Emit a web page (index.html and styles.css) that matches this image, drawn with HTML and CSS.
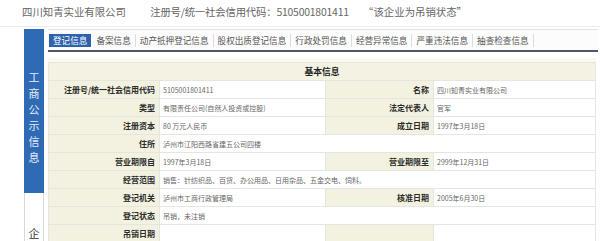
FILE: index.html
```html
<!DOCTYPE html>
<html lang="zh-CN">
<head>
    <meta charset="UTF-8">
    <title>企业信用信息公示</title>
    <link rel="stylesheet" href="styles.css">
</head>
<body>
    <div class="topbar">
        <span class="corp-name">四川知青实业有限公司</span>
        <span class="corp-code">注册号/统一社会信用代码：5105001801411</span>
        <span class="corp-state">“该企业为吊销状态”</span>
    </div>

    <div class="main">
        <div class="side">
            <div class="side-blue">工<br>商<br>公<br>示<br>信<br>息</div>
            <div class="side-next">企</div>
        </div>

        <div class="content">
            <div class="tabs">
                <span class="tab active">登记信息</span>
                <span class="tab">备案信息</span>
                <span class="tab">动产抵押登记信息</span>
                <span class="tab">股权出质登记信息</span>
                <span class="tab">行政处罚信息</span>
                <span class="tab">经营异常信息</span>
                <span class="tab">严重违法信息</span>
                <span class="tab">抽查检查信息</span>
            </div>

            <div class="panel">
                <table class="info">
                    <colgroup>
                        <col class="c-label">
                        <col class="c-value">
                        <col class="c-label2">
                        <col>
                    </colgroup>
                    <tr>
                        <th colspan="4" class="caption">基本信息</th>
                    </tr>
                    <tr>
                        <th>注册号/统一社会信用代码</th>
                        <td>5105001801411</td>
                        <th>名称</th>
                        <td>四川知青实业有限公司</td>
                    </tr>
                    <tr>
                        <th>类型</th>
                        <td>有限责任公司(自然人投资或控股)</td>
                        <th>法定代表人</th>
                        <td>官军</td>
                    </tr>
                    <tr>
                        <th>注册资本</th>
                        <td>80 万元人民币</td>
                        <th>成立日期</th>
                        <td>1997年3月18日</td>
                    </tr>
                    <tr>
                        <th>住所</th>
                        <td colspan="3">泸州市江阳西路省建五公司四楼</td>
                    </tr>
                    <tr>
                        <th>营业期限自</th>
                        <td>1997年3月18日</td>
                        <th>营业期限至</th>
                        <td>2999年12月31日</td>
                    </tr>
                    <tr>
                        <th>经营范围</th>
                        <td colspan="3">销售：针纺织品、百货、办公用品、日用杂品、五金交电、饲料。</td>
                    </tr>
                    <tr>
                        <th>登记机关</th>
                        <td>泸州市工商行政管理局</td>
                        <th>核准日期</th>
                        <td>2005年6月30日</td>
                    </tr>
                    <tr>
                        <th>登记状态</th>
                        <td colspan="3">吊销，未注销</td>
                    </tr>
                    <tr>
                        <th>吊销日期</th>
                        <td></td>
                        <th></th>
                        <td></td>
                    </tr>
                </table>
            </div>
        </div>
    </div>
</body>
</html>
```

FILE: styles.css
```css
body {
    margin: 0;
    padding: 0;
    background: #fff;
    font-family: "Noto Sans CJK SC", "Noto Sans", sans-serif;
    color: #333;
    overflow: hidden;
}
.topbar {
    height: 26px;
    line-height: 24px;
    padding-left: 22px;
    font-size: 10.4px;
    color: #666;
    border-bottom: 1px solid #ececec;
    white-space: nowrap;
}
.corp-code {
    margin-left: 22px;
    letter-spacing: -0.2px;
}
.corp-state {
    margin-left: 12px;
}
.main {
    display: flex;
    padding-left: 24px;
    margin-top: 2px;
}
.side {
    width: 20px;
    display: flex;
    flex-direction: column;
}
.side-blue {
    height: 124px;
    padding-top: 40px;
    background: #2f6ab4;
    color: #e6eefa;
    font-size: 11px;
    line-height: 16px;
    text-align: center;
}
.side-next {
    height: 60px;
    box-sizing: border-box;
    border: 1px solid #d8d8d8;
    border-top: none;
    padding-top: 32px;
    text-align: center;
    font-size: 11px;
    line-height: 16px;
    color: #333;
}
.content {
    margin-left: 4px;
    width: 550px;
}
.tabs {
    display: flex;
    align-items: center;
    height: 20px;
    padding-left: 1px;
    border-top: 1px solid #e2e2e2;
    border-bottom: 2px solid #4f5966;
    background: #fcfcfc;
}
.tab {
    font-size: 8.6px;
    line-height: 13px;
    padding: 0 4px;
    color: #555;
    border-right: 1px solid #dcdcdc;
    white-space: nowrap;
}
.tab.active {
    background: #2f62ad;
    color: #fff;
    border-right-color: #fff;
}
.panel {
    margin-top: 6px;
    padding-top: 4px;
    width: 548px;
    background: #f9f9f0;
}
.info {
    width: 548px;
    border-collapse: collapse;
    table-layout: fixed;
}
.c-label {
    width: 111px;
}
.c-value {
    width: 166px;
}
.c-label2 {
    width: 108px;
}
.info th,
.info td {
    height: 17px;
    padding: 0;
    border: 1px solid #e6e6e0;
    white-space: nowrap;
    overflow: hidden;
}
.info th {
    background: #f3f2e1;
    text-align: right;
    padding-right: 4px;
    font-size: 8px;
    font-weight: bold;
    color: #2b2b2b;
}
.info td {
    background: #fff;
    padding-left: 3px;
    font-size: 7px;
    color: #666;
}
.info th.caption {
    height: 17px;
    text-align: center;
    padding: 0;
    font-size: 8.8px;
    color: #222;
    background: #f4f3e3;
}
```
